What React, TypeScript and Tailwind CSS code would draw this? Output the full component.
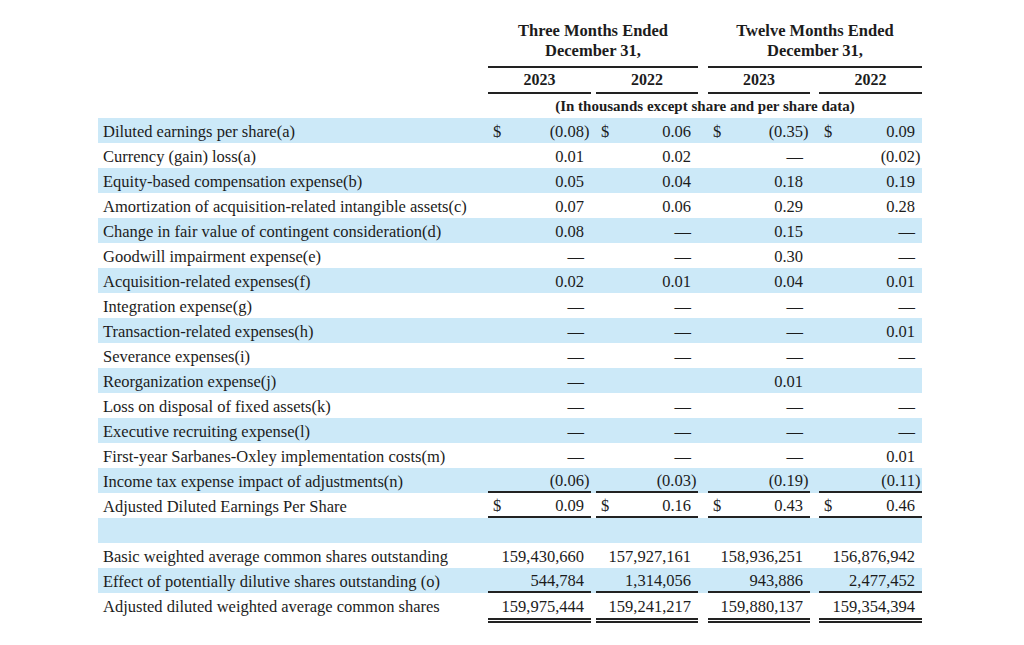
import React from "react";

type Cell = { v: string; dollar?: boolean } | null;
type Row = { label: string; vals: Cell[]; blue: boolean; rule?: "single" };

const grid = "grid grid-cols-[390px_103px_5px_102px_10px_102px_9px_103px]";

const d = (v: string): Cell => ({ v, dollar: true });
const n = (v: string): Cell => ({ v });
const dash = n("—");

const rows: Row[] = [
  { label: "Diluted earnings per share(a)", vals: [d("(0.08)"), d("0.06"), d("(0.35)"), d("0.09")], blue: true },
  { label: "Currency (gain) loss(a)", vals: [n("0.01"), n("0.02"), dash, n("(0.02)")], blue: false },
  { label: "Equity-based compensation expense(b)", vals: [n("0.05"), n("0.04"), n("0.18"), n("0.19")], blue: true },
  { label: "Amortization of acquisition-related intangible assets(c)", vals: [n("0.07"), n("0.06"), n("0.29"), n("0.28")], blue: false },
  { label: "Change in fair value of contingent consideration(d)", vals: [n("0.08"), dash, n("0.15"), dash], blue: true },
  { label: "Goodwill impairment expense(e)", vals: [dash, dash, n("0.30"), dash], blue: false },
  { label: "Acquisition-related expenses(f)", vals: [n("0.02"), n("0.01"), n("0.04"), n("0.01")], blue: true },
  { label: "Integration expense(g)", vals: [dash, dash, dash, dash], blue: false },
  { label: "Transaction-related expenses(h)", vals: [dash, dash, dash, n("0.01")], blue: true },
  { label: "Severance expenses(i)", vals: [dash, dash, dash, dash], blue: false },
  { label: "Reorganization expense(j)", vals: [dash, null, n("0.01"), null], blue: true },
  { label: "Loss on disposal of fixed assets(k)", vals: [dash, dash, dash, dash], blue: false },
  { label: "Executive recruiting expense(l)", vals: [dash, dash, dash, dash], blue: true },
  { label: "First-year Sarbanes-Oxley implementation costs(m)", vals: [dash, dash, dash, n("0.01")], blue: false },
  { label: "Income tax expense impact of adjustments(n)", vals: [n("(0.06)"), n("(0.03)"), n("(0.19)"), n("(0.11)")], blue: true, rule: "single" },
  { label: "Adjusted Diluted Earnings Per Share", vals: [d("0.09"), d("0.16"), d("0.43"), d("0.46")], blue: false, rule: "single" },
  { label: "", vals: [null, null, null, null], blue: true },
  { label: "Basic weighted average common shares outstanding", vals: [n("159,430,660"), n("157,927,161"), n("158,936,251"), n("156,876,942")], blue: false },
  { label: "Effect of potentially dilutive shares outstanding (o)", vals: [n("544,784"), n("1,314,056"), n("943,886"), n("2,477,452")], blue: true, rule: "single" },
  { label: "Adjusted diluted weighted average common shares", vals: [n("159,975,444"), n("159,241,217"), n("159,880,137"), n("159,354,394")], blue: false },
];

function ValueCell({ cell, rule }: { cell: Cell; rule?: "single" }) {
  const paren = cell && cell.v.startsWith("(");
  const body = cell ? (paren ? cell.v.slice(0, -1) : cell.v) : "";
  return (
    <div
      className={`flex h-[25px] items-center justify-between pl-[5px] pr-[1px] pt-[3px] ${
        rule ? "border-b-2 border-[#222]" : ""
      }`}
    >
      <span>{cell?.dollar ? "$" : ""}</span>
      <span className="whitespace-nowrap">
        {body}
        <span className="inline-block w-[6px]">{paren ? ")" : ""}</span>
      </span>
    </div>
  );
}

function TableRow({ row }: { row: Row }) {
  return (
    <div className={`${grid} ${row.blue ? "bg-[#cce9f8]" : "bg-white"}`}>
      <div className="flex h-[25px] items-center whitespace-nowrap pl-[5px] pt-[3px]">{row.label}</div>
      <ValueCell cell={row.vals[0]} rule={row.rule} />
      <div />
      <ValueCell cell={row.vals[1]} rule={row.rule} />
      <div />
      <ValueCell cell={row.vals[2]} rule={row.rule} />
      <div />
      <ValueCell cell={row.vals[3]} rule={row.rule} />
    </div>
  );
}

export default function App() {
  return (
    <div className="min-h-[645px] w-full bg-white pl-[98px] pt-[21px] font-['Liberation_Serif','Times_New_Roman',serif] text-[16.5px] text-[#1c1c1c]">
      <div className="w-[824px]">
        {/* column headers */}
        <div className={`${grid} font-bold`}>
          <div />
          <div className="col-span-3 border-b-2 border-[#222] pb-[5px] text-center leading-[20px]">
            Three Months Ended
            <br />
            December 31,
          </div>
          <div />
          <div className="col-span-3 border-b-2 border-[#222] pb-[5px] text-center leading-[20px]">
            Twelve Months Ended
            <br />
            December 31,
          </div>
        </div>
        <div className={`${grid} text-[16px] font-bold`}>
          <div />
          <div className="flex h-[26px] items-center justify-center border-b-2 border-[#222]">2023</div>
          <div />
          <div className="flex h-[26px] items-center justify-center border-b-2 border-[#222]">2022</div>
          <div />
          <div className="flex h-[26px] items-center justify-center border-b-2 border-[#222]">2023</div>
          <div />
          <div className="flex h-[26px] items-center justify-center border-b-2 border-[#222]">2022</div>
        </div>
        <div className={`${grid} text-[15px] font-bold`}>
          <div />
          <div className="col-span-7 flex h-[24px] items-center justify-center">
            (In thousands except share and per share data)
          </div>
        </div>

        {rows.map((r, i) => (
          <TableRow key={i} row={r} />
        ))}

        {/* double underline for final totals */}
        <div className={grid}>
          <div />
          <div className="h-[5px] border-b-[5px] border-double border-[#222]" />
          <div />
          <div className="h-[5px] border-b-[5px] border-double border-[#222]" />
          <div />
          <div className="h-[5px] border-b-[5px] border-double border-[#222]" />
          <div />
          <div className="h-[5px] border-b-[5px] border-double border-[#222]" />
        </div>
      </div>
    </div>
  );
}
